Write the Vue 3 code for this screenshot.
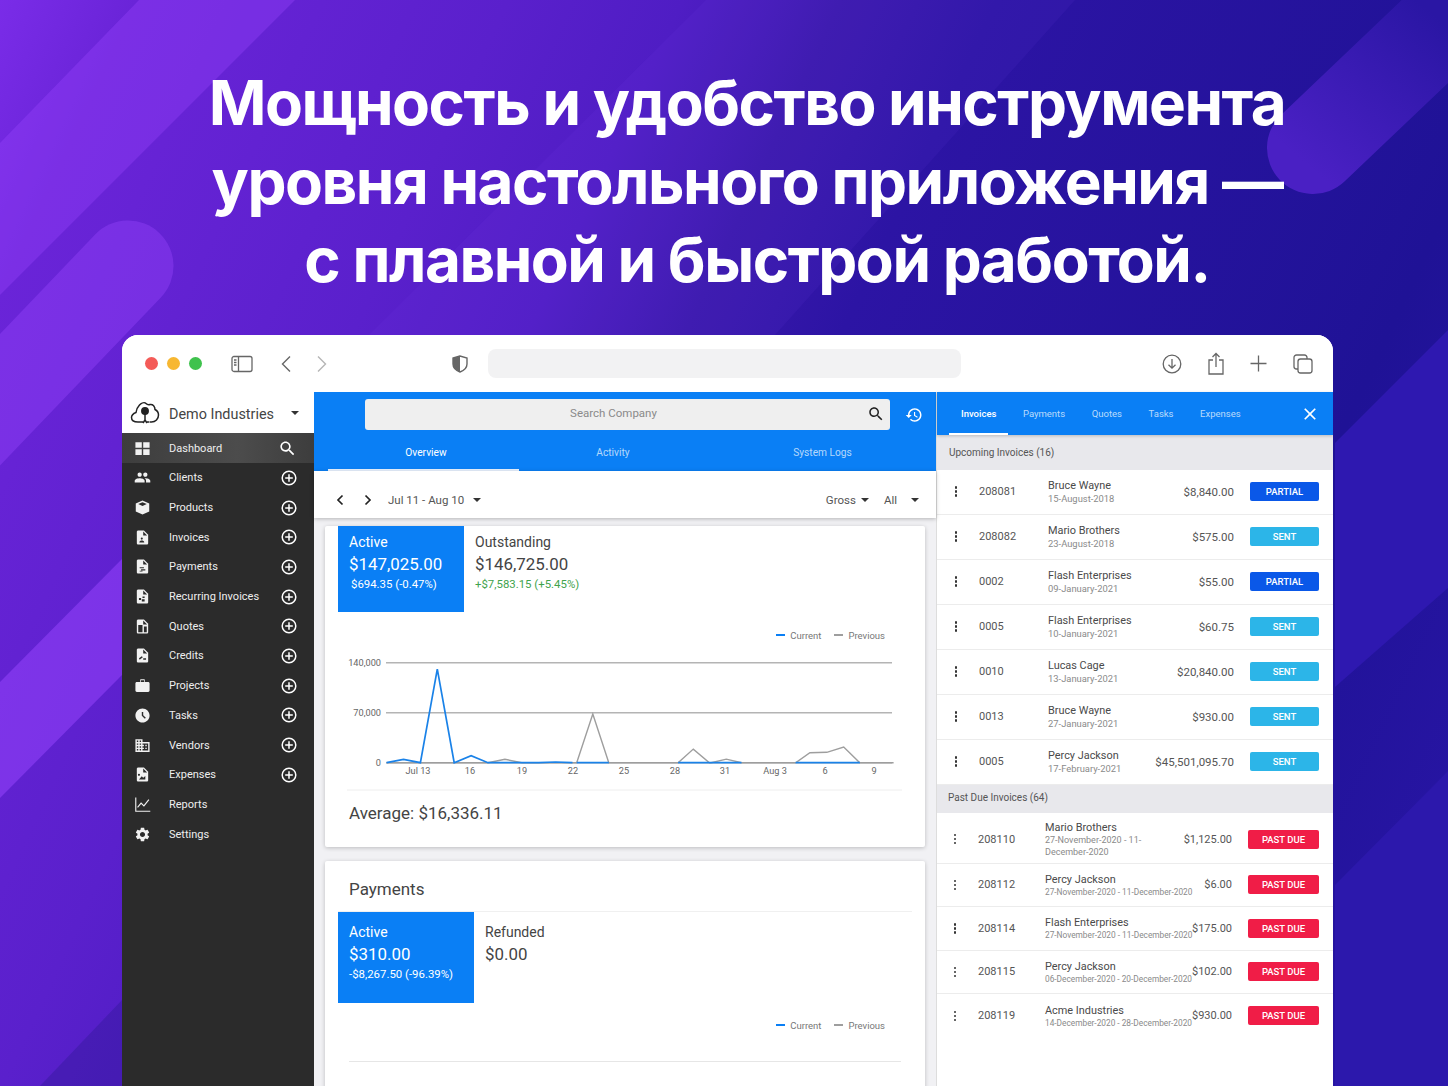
<template>
  <div class="page">
    <!-- background stripes -->
    <svg class="stripes" width="1448" height="1086" viewBox="0 0 1448 1086">
      <defs>
        <linearGradient id="blob" gradientUnits="userSpaceOnUse" x1="1313" y1="170" x2="1440" y2="20">
          <stop offset="0" stop-color="#4a20c4" />
          <stop offset="1" stop-color="#2a16a4" />
        </linearGradient>
      </defs>
      <polygon points="139,0 295,0 0,295 0,143" fill="#9a46ff" opacity="0.35" />
      <polygon points="706,0 1075,0 775,335 369,335" fill="#8a50ff" opacity="0.07" />
      <line x1="128" y1="266" x2="-120" y2="525" stroke="#9a46ff" stroke-width="91" stroke-linecap="round" opacity="0.38" />
      <polygon points="122,559 122,675 0,798 0,682" fill="#9a46ff" opacity="0.5" />
      <polygon points="122,1000 122,1086 40,1086" fill="#2c1690" opacity="0.35" />
      <line x1="1313" y1="148" x2="1500" y2="-30" stroke="url(#blob)" stroke-width="92" stroke-linecap="round" />
      <polygon points="1335,443 1448,330 1448,588 1335,687" fill="#2e18b0" />
      <polygon points="1335,885 1448,771 1448,1086 1335,1086" fill="#2c18ac" />
    </svg>

    <h1 class="headline">
      Мощность и удобство инструмента<br />
      уровня настольного приложения —<br />
      <span class="headline-last">с плавной и быстрой работой.</span>
    </h1>

    <div class="window">
      <div class="toolbar">
        <span class="dot red"></span>
        <span class="dot yellow"></span>
        <span class="dot green"></span>
        <svg class="tb-sidebar" width="22" height="18" viewBox="0 0 22 18" fill="none" stroke="#666" stroke-width="1.3">
          <rect x="1" y="1.5" width="20" height="15" rx="2" />
          <path d="M7.5 1.5v15" />
          <path d="M3 5h2.5M3 7.5h2.5M3 10h2.5" />
        </svg>
        <svg class="tb-back" width="12" height="18" viewBox="0 0 12 18" fill="none" stroke="#666" stroke-width="1.4">
          <path d="M10 1.5 2.5 9l7.5 7.5" />
        </svg>
        <svg class="tb-forward" width="12" height="18" viewBox="0 0 12 18" fill="none" stroke="#b5b5b5" stroke-width="1.4">
          <path d="M2 1.5 9.5 9 2 16.5" />
        </svg>
        <svg class="tb-shield" width="16" height="18" viewBox="0 0 16 18">
          <path d="M8 1 1 3v6c0 4 3 6.5 7 8 4-1.5 7-4 7-8V3z" fill="#fff" stroke="#666" stroke-width="1.4" />
          <path d="M8 1 1 3v6c0 4 3 6.5 7 8z" fill="#666" />
        </svg>
        <div class="address"></div>
        <div class="tb-right">
          <svg width="20" height="20" viewBox="0 0 20 20" fill="none" stroke="#666" stroke-width="1.3">
            <circle cx="10" cy="10" r="8.8" />
            <path d="M10 5v9M6.5 10.8 10 14.2l3.5-3.4" />
          </svg>
          <svg width="16" height="23" viewBox="0 0 16 23" fill="none" stroke="#666" stroke-width="1.3">
            <path d="M5 8H1v14h14V8h-4" />
            <path d="M8 15V2M4.5 5 8 1.5 11.5 5" />
          </svg>
          <svg width="17" height="17" viewBox="0 0 17 17" fill="none" stroke="#666" stroke-width="1.3">
            <path d="M8.5 0.5v16M0.5 8.5h16" />
          </svg>
          <svg width="20" height="20" viewBox="0 0 20 20" fill="none" stroke="#666" stroke-width="1.3">
            <path d="M5 15H3.5A2.5 2.5 0 0 1 1 12.5V3.5A2.5 2.5 0 0 1 3.5 1h8A2.5 2.5 0 0 1 14 3.5V5" />
            <rect x="5" y="5" width="14" height="14" rx="2.5" />
          </svg>
        </div>
      </div>

      <div class="app">
        <aside class="sidebar">
          <div class="company">
            <svg class="cloud" width="30" height="26" viewBox="0 0 30 26" fill="none" stroke="#222" stroke-width="1.5">
              <path d="M8 22c-4 0-6.500-1.500-6.500-4.500 0-2.500 2-4 4.500-5 .5-3 1.500-5.500 3.500-7.500 2-2 5-3 6.500-1.500 1 1 2 1.500 4 1 3-.5 5 2 5 5 2 1 3.500 3 3.500 5.500 0 4-3 7-7 7h-2" />
              <path d="M8 22h5M17 22h2" />
              <circle cx="15" cy="11" r="3.2" fill="#222" />
              <path d="M15 11v9M15 20l-2 3M15 20l2 3" />
            </svg>
            <span class="company-name">Demo Industries</span>
            <span class="caret"></span>
          </div>
          <nav class="nav">
            <div v-for="item in navItems" :key="item.label" :class="['nav-row', { current: item.current }]">
              <svg class="nav-icon" width="17" height="17" viewBox="0 0 24 24" fill="#f1f1f1">
                <path v-if="item.icon" :d="item.icon" />
                <path v-if="item.marks" :d="item.marks" fill="#2b2b2b" />
                <path v-if="item.line" :d="item.line" fill="none" stroke="#f1f1f1" stroke-width="1.6" />
              </svg>
              <span class="nav-label">{{ item.label }}</span>
              <svg v-if="item.current" class="nav-action" width="19" height="19" viewBox="0 0 24 24" fill="#fff">
                <path :d="icons.search" />
              </svg>
              <svg v-else-if="item.add" class="nav-action" width="16" height="16" viewBox="0 0 16 16" fill="none" stroke="#fff" stroke-width="1.5">
                <circle cx="8" cy="8" r="6.8" />
                <path d="M8 4.2v7.6M4.2 8h7.6" />
              </svg>
            </div>
          </nav>
        </aside>

        <main class="center">
          <div class="center-head">
            <div class="search-line">
              <div class="search">
                <span class="search-text">Search Company</span>
                <svg class="search-icon" width="18" height="18" viewBox="0 0 24 24" fill="#222">
                  <path :d="icons.search" />
                </svg>
              </div>
              <svg class="history" width="18" height="18" viewBox="0 0 24 24" fill="#fff">
                <path :d="icons.history" />
              </svg>
            </div>
            <div class="center-tabs">
              <div class="center-tab active"><span>Overview</span></div>
              <div class="center-tab activity">Activity</div>
              <div class="center-tab logs">System Logs</div>
            </div>
          </div>

          <div class="filters">
            <svg width="10" height="12" viewBox="0 0 10 12" fill="none" stroke="#222" stroke-width="1.7">
              <path d="M7.5 1.5 3 6l4.5 4.5" />
            </svg>
            <svg class="next" width="10" height="12" viewBox="0 0 10 12" fill="none" stroke="#222" stroke-width="1.7">
              <path d="M2.5 1.5 7 6l-4.5 4.5" />
            </svg>
            <span class="range">Jul 11 - Aug 10</span>
            <span class="caret small wide-gap"></span>
            <span class="spacer"></span>
            <span class="filter-text">Gross</span>
            <span class="caret small"></span>
            <span class="filter-text all">All</span>
            <span class="caret last"></span>
          </div>

          <div class="cards">
            <section class="card first">
              <div class="tiles">
                <div class="tile active">
                  <div class="tile-title">Active</div>
                  <div class="tile-value">$147,025.00</div>
                  <div class="tile-diff indent">$694.35 (-0.47%)</div>
                </div>
                <div class="tile">
                  <div class="tile-title">Outstanding</div>
                  <div class="tile-value">$146,725.00</div>
                  <div class="tile-diff up">+$7,583.15 (+5.45%)</div>
                </div>
              </div>
              <div class="legend">
                <span class="legend-dash blue"></span><span>Current</span>
                <span class="legend-dash gray"></span><span>Previous</span>
              </div>
              <svg class="chart" width="600" height="150" viewBox="325 643 600 150">
                <line v-for="g in gridLines" :key="g.y" x1="386" x2="892" :y1="g.y" :y2="g.y" stroke="#b4b4b4" stroke-width="1.5" />
                <text v-for="g in gridLines" :key="'l' + g.y" x="381" :y="g.y + 3" text-anchor="end" class="axis">{{ g.label }}</text>
                <text v-for="t in xTicks" :key="t.label" :x="t.x" y="773.5" text-anchor="middle" class="axis">{{ t.label }}</text>
                <polyline :points="previousPoints" fill="none" stroke="#9e9e9e" stroke-width="1.4" />
                <polyline v-for="(p, i) in currentPoints" :key="i" :points="p" fill="none" stroke="#1a82e8" stroke-width="1.7" />
                <line x1="347" x2="902" y1="790" y2="790" stroke="#eeeeee" stroke-width="1" />
              </svg>
              <div class="average">Average: $16,336.11</div>
            </section>

            <section class="card second">
              <h2 class="card-title">Payments</h2>
              <div class="tiles wide">
                <div class="tile active">
                  <div class="tile-title">Active</div>
                  <div class="tile-value">$310.00</div>
                  <div class="tile-diff">-$8,267.50 (-96.39%)</div>
                </div>
                <div class="tile">
                  <div class="tile-title">Refunded</div>
                  <div class="tile-value">$0.00</div>
                </div>
              </div>
              <div class="legend low">
                <span class="legend-dash blue"></span><span>Current</span>
                <span class="legend-dash gray"></span><span>Previous</span>
              </div>
              <div class="empty-rule"></div>
            </section>
          </div>
        </main>

        <aside class="panel">
          <div class="panel-tabs">
            <div v-for="(t, i) in panelTabs" :key="t" :class="['panel-tab', { active: i === 0 }]">{{ t }}</div>
            <svg class="panel-close" width="20" height="20" viewBox="0 0 24 24" fill="#fff">
              <path :d="icons.close" />
            </svg>
          </div>

          <div class="group">Upcoming Invoices (16)</div>
          <div v-for="row in upcoming" :key="row.id + row.date" class="inv">
            <span class="more"><i></i><i></i><i></i></span>
            <span class="inv-id">{{ row.id }}</span>
            <div class="inv-client">
              <div class="inv-name">{{ row.name }}</div>
              <div class="inv-date">{{ row.date }}</div>
            </div>
            <span class="inv-amount">{{ row.amount }}</span>
            <span :class="['badge', row.status.toLowerCase()]">{{ row.status }}</span>
          </div>

          <div class="group past">Past Due Invoices (64)</div>
          <div v-for="row in pastDue" :key="row.id" :class="['inv', 'overdue', { tall: row.tall }]">
            <span class="more"><i></i><i></i><i></i></span>
            <span class="inv-id">{{ row.id }}</span>
            <div class="inv-client">
              <div class="inv-name">{{ row.name }}</div>
              <div class="inv-date">{{ row.date }}</div>
            </div>
            <span class="inv-amount">{{ row.amount }}</span>
            <span class="badge due">PAST DUE</span>
          </div>
        </aside>
      </div>
    </div>
  </div>
</template>

<script setup>
const icons = {
  search: 'M15.5 14h-.79l-.28-.27C15.41 12.59 16 11.11 16 9.5 16 5.91 13.09 3 9.5 3S3 5.91 3 9.5 5.91 16 9.5 16c1.61 0 3.09-.59 4.23-1.57l.27.28v.79l5 4.99L20.49 19l-4.99-5zm-6 0C7.01 14 5 11.99 5 9.5S7.01 5 9.5 5 14 7.01 14 9.5 11.99 14 9.5 14z',
  history: 'M13 3c-4.97 0-9 4.03-9 9H1l3.89 3.89.07.14L9 12H6c0-3.87 3.13-7 7-7s7 3.13 7 7-3.13 7-7 7c-1.93 0-3.68-.79-4.94-2.06l-1.42 1.42C8.27 19.99 10.51 21 13 21c4.97 0 9-4.03 9-9s-4.03-9-9-9zm-1 5v5l4.28 2.54.72-1.21-3.5-2.08V8H12z',
  close: 'M19 6.41L17.59 5 12 10.59 6.41 5 5 6.41 10.59 12 5 17.59 6.41 19 12 13.41 17.59 19 19 17.59 13.41 12z',
}

const file = 'M14 2H6c-1.1 0-2 .9-2 2v16c0 1.1.9 2 2 2h12c1.1 0 2-.9 2-2V8l-6-6z'

const navItems = [
  { label: 'Dashboard', current: true, icon: 'M2 3h9v8H2zM13 3h9v8h-9zM2 13h9v8H2zM13 13h9v8h-9z' },
  { label: 'Clients', add: true, icon: 'M16 11c1.66 0 2.99-1.34 2.99-3S17.66 5 16 5c-1.66 0-3 1.34-3 3s1.34 3 3 3zm-8 0c1.66 0 2.99-1.34 2.99-3S9.66 5 8 5C6.34 5 5 6.34 5 8s1.34 3 3 3zm0 2c-2.33 0-7 1.17-7 3.5V19h14v-2.5c0-2.33-4.67-3.5-7-3.5zm8 0c-.29 0-.62.02-.97.05 1.16.84 1.97 1.97 1.97 3.45V19h6v-2.5c0-2.33-4.67-3.5-7-3.5z' },
  { label: 'Products', add: true, icon: 'M12 2l9.5 4.5v11L12 22l-9.5-4.5v-11z', marks: 'M12 4.5 6 7l6 3 6-3z' },
  { label: 'Invoices', add: true, icon: file, marks: 'M13 3.5V9h5.5zM11 12a1.5 1.5 0 1 1 0 3 1.5 1.5 0 0 1 0-3zM7.5 19c0-2 2-2.8 3.5-2.8s3.5.8 3.5 2.8z' },
  { label: 'Payments', add: true, icon: file, marks: 'M13 3.5V9h5.5zM8 13h6v1.5H8zM10 16h6v1.5h-6zM8 18h4v1H8z' },
  { label: 'Recurring Invoices', add: true, icon: file, marks: 'M13 3.5V9h5.5zM7 14h3v3H7zM12 12h3v2h-3zM11 16h4v3h-4z' },
  { label: 'Quotes', add: true, icon: file, marks: 'M13 3.5V9h5.5zM6 10h6v10H6zM14 12h4v8h-4z' },
  { label: 'Credits', add: true, icon: file, marks: 'M13 3.5V9h5.5zM7 16l4-3 1.5 1.5L8 18zM13 16h4v2h-4z' },
  { label: 'Projects', add: true, icon: 'M20 7h-4.5V4.5c0-.8-.7-1.5-1.5-1.5h-4c-.8 0-1.5.7-1.5 1.5V7H4c-1.1 0-2 .9-2 2v10c0 1.1.9 2 2 2h16c1.1 0 2-.9 2-2V9c0-1.1-.9-2-2-2zm-5.5 0h-5V4.5h5z' },
  { label: 'Tasks', add: true, icon: 'M11.99 2C6.47 2 2 6.48 2 12s4.47 10 9.99 10C17.52 22 22 17.52 22 12S17.52 2 11.99 2zm3.3 14.71L11 12.41V7h2v4.59l3.71 3.71-1.42 1.41z' },
  { label: 'Vendors', add: true, icon: 'M12 7V3H2v18h20V7H12zM6 19H4v-2h2v2zm0-4H4v-2h2v2zm0-4H4V9h2v2zm0-4H4V5h2v2zm4 12H8v-2h2v2zm0-4H8v-2h2v2zm0-4H8V9h2v2zm0-4H8V5h2v2zm10 12h-8v-2h2v-2h-2v-2h2v-2h-2V9h8v10zm-2-8h-2v2h2v-2zm0 4h-2v2h2v-2z' },
  { label: 'Expenses', add: true, icon: file, marks: 'M13 3.5V9h5.5zM7 11a1.5 1.5 0 1 1 0 3 1.5 1.5 0 0 1 0-3zM7 19l4-4.5 2 2 3-2.5v5z' },
  { label: 'Reports', line: 'M2.5 2v19.5H23M5 16l5-6 4 4 7-9' },
  { label: 'Settings', icon: 'M19.14 12.94c.04-.3.06-.61.06-.94 0-.32-.02-.64-.07-.94l2.03-1.58c.18-.14.23-.41.12-.61l-1.92-3.32c-.12-.22-.37-.29-.59-.22l-2.39.96c-.5-.38-1.03-.7-1.62-.94l-.36-2.54c-.04-.24-.24-.41-.48-.41h-3.84c-.24 0-.43.17-.47.41l-.36 2.54c-.59.24-1.13.57-1.62.94l-2.39-.96c-.22-.08-.47 0-.59.22L2.74 8.87c-.12.21-.08.47.12.61l2.03 1.58c-.05.3-.09.63-.09.94s.02.64.07.94l-2.03 1.58c-.18.14-.23.41-.12.61l1.92 3.32c.12.22.37.29.59.22l2.39-.96c.5.38 1.03.7 1.62.94l.36 2.54c.05.24.24.41.48.41h3.84c.24 0 .44-.17.47-.41l.36-2.54c.59-.24 1.13-.56 1.62-.94l2.39.96c.22.08.47 0 .59-.22l1.92-3.32c.12-.22.07-.47-.12-.61l-2.01-1.58zM12 15.6c-1.98 0-3.6-1.62-3.6-3.6s1.62-3.6 3.6-3.6 3.6 1.62 3.6 3.6-1.62 3.6-3.6 3.6z' },
]

// chart data is [day index from Jul 11, value]
const X0 = 386.6
const DAY = 16.9
const BASE = 762.7
const toPoints = (data) => data.map(([d, v]) => `${(X0 + d * DAY).toFixed(1)},${(BASE - v / 1400).toFixed(1)}`).join(' ')

const gridLines = [
  { y: 662.7, label: '140,000' },
  { y: 712.7, label: '70,000' },
  { y: 762.7, label: '0' },
]

const xTicks = [
  { x: 418, label: 'Jul 13' },
  { x: 470, label: '16' },
  { x: 522, label: '19' },
  { x: 573, label: '22' },
  { x: 624, label: '25' },
  { x: 675, label: '28' },
  { x: 725, label: '31' },
  { x: 775, label: 'Aug 3' },
  { x: 825, label: '6' },
  { x: 874, label: '9' },
]

const previousPoints = toPoints([
  [0, 0], [6, 0], [7, 4700], [8, 0], [11.25, 0], [12.2, 68000], [13.15, 0], [17.25, 0], [18.15, 19000],
  [19.1, 0], [19.2, 0], [20.1, 5000], [21, 0], [24.2, 0], [25.05, 14000], [26.05, 14500], [27.05, 22000], [28, 0], [30, 0],
])

const currentPoints = [
  [[0, 0], [1, 4700], [2, 0], [3, 131000], [4, 0], [5, 9800], [6, 0], [8, 0], [9, 0], [10, 1000], [11, 0]],
  [[11.25, 0], [13.15, 0]],
  [[17.25, 0], [21, 0]],
  [[24.2, 0], [28, 0]],
].map(toPoints)

const panelTabs = ['Invoices', 'Payments', 'Quotes', 'Tasks', 'Expenses']

const upcoming = [
  { id: '208081', name: 'Bruce Wayne', date: '15-August-2018', amount: '$8,840.00', status: 'PARTIAL' },
  { id: '208082', name: 'Mario Brothers', date: '23-August-2018', amount: '$575.00', status: 'SENT' },
  { id: '0002', name: 'Flash Enterprises', date: '09-January-2021', amount: '$55.00', status: 'PARTIAL' },
  { id: '0005', name: 'Flash Enterprises', date: '10-January-2021', amount: '$60.75', status: 'SENT' },
  { id: '0010', name: 'Lucas Cage', date: '13-January-2021', amount: '$20,840.00', status: 'SENT' },
  { id: '0013', name: 'Bruce Wayne', date: '27-January-2021', amount: '$930.00', status: 'SENT' },
  { id: '0005', name: 'Percy Jackson', date: '17-February-2021', amount: '$45,501,095.70', status: 'SENT' },
]

const pastDue = [
  { id: '208110', name: 'Mario Brothers', date: '27-November-2020 - 11-December-2020', amount: '$1,125.00', tall: true },
  { id: '208112', name: 'Percy Jackson', date: '27-November-2020 - 11-December-2020', amount: '$6.00' },
  { id: '208114', name: 'Flash Enterprises', date: '27-November-2020 - 11-December-2020', amount: '$175.00' },
  { id: '208115', name: 'Percy Jackson', date: '06-December-2020 - 20-December-2020', amount: '$102.00' },
  { id: '208119', name: 'Acme Industries', date: '14-December-2020 - 28-December-2020', amount: '$930.00' },
]
</script>

<style>
html,
body {
  margin: 0;
  background: #2a1398;
}
</style>

<style scoped>
.page {
  position: relative;
  width: 1448px;
  height: 1086px;
  overflow: hidden;
  display: flex;
  flex-direction: column;
  align-items: center;
  font-family: Roboto, "Liberation Sans", sans-serif;
  background: linear-gradient(115deg, #7a2ce8 0%, #6a24d8 7%, #5a20cc 26%, #4f1dc4 35%, #3a18ac 43%, #2c14a4 51%, #1f1296 79%, #2a16a8 100%);
}

.stripes {
  position: absolute;
  left: 0;
  top: 0;
}

.headline {
  position: relative;
  margin: 0 0 0 46px;
  padding-top: 64px;
  height: 335px;
  box-sizing: border-box;
  text-align: center;
  color: #fff;
  font-family: Inter, "Noto Sans", sans-serif;
  font-size: 62px;
  line-height: 78.5px;
  font-weight: 700;
  letter-spacing: -1.5px;
  white-space: nowrap;
}

.headline-last {
  padding-left: 20px;
}

.window {
  position: relative;
  width: 1211px;
  height: 751px;
  margin-left: 7px;
  background: #fff;
  border-radius: 16px 16px 0 0;
  overflow: hidden;
  display: flex;
  flex-direction: column;
}

.toolbar {
  height: 57px;
  flex: none;
  display: flex;
  align-items: center;
  padding: 0 20px 0 23px;
  box-sizing: border-box;
  background: #fff;
}

.dot {
  width: 13px;
  height: 13px;
  border-radius: 50%;
  margin-right: 9px;
}
.red { background: #f45b58; }
.yellow { background: #f7b731; }
.green { background: #3fc24d; }

.tb-sidebar { margin-left: 20px; }
.tb-back { margin-left: 27px; }
.tb-forward { margin-left: 24px; }
.tb-shield { margin-left: 124px; }

.address {
  width: 473px;
  height: 29px;
  margin-left: 20px;
  border-radius: 8px;
  background: #f2f2f3;
}

.tb-right {
  margin-left: auto;
  display: flex;
  align-items: center;
  gap: 26px;
}

.app {
  flex: 1;
  display: flex;
  min-height: 0;
}

/* left nav */
.sidebar {
  width: 192px;
  flex: none;
  background: #2b2b2b;
  display: flex;
  flex-direction: column;
}

.company {
  height: 41px;
  display: flex;
  align-items: center;
  padding: 0 15px 0 8px;
  background: #fff;
  flex: none;
}

.company-name {
  margin: 3px 0 0 9px;
  font-size: 14.4px;
  color: #444;
  flex: 1;
}

.caret {
  width: 0;
  height: 0;
  border-left: 4px solid transparent;
  border-right: 4px solid transparent;
  border-top: 4px solid #333;
}
.caret.small { margin-left: 5px; }
.caret.wide-gap { margin-left: 9px; }
.caret.last { margin-left: 14px; }

.nav-row {
  height: 29.7px;
  display: flex;
  align-items: center;
  padding: 0 17px 0 12px;
  color: #eee;
  font-size: 11px;
}
.nav-row.current {
  height: 30px;
  background: linear-gradient(90deg, #3d3d3d, #4c4c4c 60%, #3d3d3d);
}

.nav-label {
  margin-left: 18px;
  flex: 1;
}

/* center column */
.center {
  width: 622px;
  flex: none;
  display: flex;
  flex-direction: column;
  background: #f1f1f4;
  min-height: 0;
}

.center-head {
  background: #0a7ff5;
  height: 79px;
  flex: none;
  box-sizing: border-box;
  padding-top: 7px;
}

.search-line {
  display: flex;
  align-items: center;
  padding-left: 51px;
}

.search {
  position: relative;
  width: 525px;
  height: 31px;
  box-sizing: border-box;
  border-radius: 3px;
  background: #efefef;
  display: flex;
  align-items: center;
  justify-content: center;
  padding: 0 28px 3px 0;
  color: #8a8a8a;
  font-size: 11.5px;
}

.search-icon {
  position: absolute;
  right: 5px;
  top: 6px;
}

.history { margin-left: 15px; }

.center-tabs {
  display: flex;
  padding-left: 14px;
  margin-top: 7px;
}

.center-tab {
  text-align: center;
  height: 34px;
  box-sizing: border-box;
  line-height: 32px;
  font-size: 10.2px;
  color: rgba(255, 255, 255, 0.7);
  flex: none;
}
.center-tab.active {
  width: 191px;
  color: #fff;
  border-bottom: 2px solid #e8f2ff;
  padding-left: 5px;
}
.center-tab.activity { width: 188px; }
.center-tab.logs { width: 231px; }

.filters {
  height: 47px;
  flex: none;
  display: flex;
  align-items: center;
  background: #fff;
  padding: 10px 17px 0 21px;
  box-sizing: border-box;
  color: #555;
  font-size: 11.5px;
  box-shadow: 0 1px 4px rgba(0, 0, 0, 0.25);
  position: relative;
  z-index: 1;
}
.filters .next { margin-left: 18px; }
.range { margin-left: 15px; }
.spacer { flex: 1; }
.filter-text.all { margin-left: 15px; }

.cards {
  flex: 1;
  min-height: 0;
  padding: 8px 11px 0;
  display: flex;
  flex-direction: column;
  gap: 14px;
}

.card {
  background: #fff;
  box-shadow: 0 1px 4px rgba(0, 0, 0, 0.22);
  border-radius: 2px;
  padding: 0 13px;
  flex: none;
  position: relative;
}
.card.first { height: 321px; }
.card.second { height: 240px; }

.tiles {
  display: flex;
  height: 86px;
}
.tiles.wide {
  height: 91px;
  border-top: 1px solid #f0f0f0;
}

.tile {
  padding: 7px 11px 0;
  color: #444;
  font-size: 14px;
  line-height: 18px;
}
.tiles.wide .tile { padding-top: 11px; }
.tile.active {
  width: 126px;
  box-sizing: border-box;
  background: #0a7ff5;
  color: #fff;
}
.tiles.wide .tile.active { width: 136px; }

.tile-value {
  font-size: 16.9px;
  line-height: 24px;
  margin-top: 1px;
}

.tile-diff {
  font-size: 11.4px;
  line-height: 14px;
  margin-top: 1px;
  white-space: nowrap;
}
.tile-diff.indent { margin-left: 2px; }
.tile-diff.up { color: #3fa34d; }

.legend {
  display: flex;
  align-items: center;
  justify-content: flex-end;
  margin-top: 17px;
  padding-right: 27px;
  color: #777;
  font-size: 9.5px;
  height: 12px;
}
.legend.low { margin-top: 16px; }

.legend-dash {
  width: 9px;
  height: 2px;
  margin-right: 5px;
}
.legend-dash.blue { background: #0a7ff5; }
.legend-dash.gray { background: #9e9e9e; margin-left: 13px; }

.chart {
  display: block;
  margin: 2px 0 0 -13px;
}

.axis {
  font-size: 9.2px;
  fill: #666;
  font-family: Roboto, "Liberation Sans", sans-serif;
}

.average {
  font-size: 17px;
  color: #444;
  padding-left: 11px;
  margin-top: 10px;
}

.card-title {
  margin: 0;
  font-weight: 400;
  font-size: 17px;
  color: #444;
  padding: 18px 0 0 11px;
  height: 50px;
  box-sizing: border-box;
  line-height: 20px;
}

.empty-rule {
  height: 1px;
  background: #e6e6e6;
  margin: 30px 11px 0 11px;
}

/* right panel */
.panel {
  flex: 1;
  min-width: 0;
  background: #fff;
  border-left: 1px solid #ddd;
  display: flex;
  flex-direction: column;
}

.panel-tabs {
  height: 43px;
  flex: none;
  background: #0a7ff5;
  display: flex;
  align-items: center;
  padding-left: 12px;
  position: relative;
  box-sizing: border-box;
  box-shadow: 0 1px 3px rgba(0, 0, 0, 0.2);
  z-index: 1;
}

.panel-tab {
  height: 43px;
  line-height: 44px;
  padding: 0 12px;
  box-sizing: border-box;
  font-size: 9.5px;
  color: rgba(255, 255, 255, 0.72);
  margin-right: 2.6px;
}
.panel-tab.active {
  color: #fff;
  font-weight: 500;
  border-bottom: 2px solid #fff;
}

.panel-close {
  position: absolute;
  right: 13px;
  top: 12px;
}

.group {
  height: 34.5px;
  flex: none;
  background: #e8e8ec;
  color: #555;
  font-size: 10px;
  line-height: 36px;
  padding-left: 12px;
}
.group.past {
  height: 28px;
  line-height: 25px;
  padding-left: 11px;
}

.inv {
  height: 45px;
  flex: none;
  box-sizing: border-box;
  display: flex;
  align-items: center;
  padding: 0 14px 0 17px;
  border-bottom: 1px solid #ececec;
  color: #555;
}
.inv:last-child { border-bottom: none; }
.inv.overdue { height: 43.5px; padding-left: 16px; }
.inv.tall { height: 51px; padding-top: 3px; }

.more {
  width: 4px;
  display: flex;
  flex-direction: column;
  gap: 1.5px;
  align-items: center;
  flex: none;
}
.more i {
  width: 2.5px;
  height: 2.5px;
  border-radius: 50%;
  background: #333;
}

.inv-id {
  width: 69px;
  margin-left: 21px;
  font-size: 11px;
  flex: none;
}
.overdue .inv-id { width: 67px; }

.inv-client {
  flex: 1 1 0;
  min-width: 0;
}
.overdue .inv-client {
  min-width: 147px;
  margin-top: 2px;
}
.overdue.tall .inv-client {
  min-width: 0;
  margin-top: 0;
}

.inv-name {
  font-size: 10.9px;
  line-height: 13px;
  color: #4a4a4a;
  white-space: nowrap;
}

.inv-date {
  font-size: 9.4px;
  line-height: 13px;
  color: #8a8a8a;
}
.overdue .inv-date {
  font-size: 8.3px;
  white-space: nowrap;
}
.overdue.tall .inv-date {
  font-size: 9px;
  line-height: 12px;
  white-space: normal;
}

.inv-amount {
  flex: none;
  text-align: right;
  font-size: 11.5px;
  white-space: nowrap;
}
.overdue .inv-amount { font-size: 11px; }

.badge {
  width: 69px;
  height: 19px;
  margin-left: 16px;
  flex: none;
  border-radius: 2px;
  color: #fff;
  font-size: 9.5px;
  font-weight: 500;
  line-height: 19px;
  text-align: center;
}
.badge.partial { background: #0a58e8; }
.badge.sent { background: #2cb5e8; }
.badge.due {
  width: 71px;
  background: #f01d47;
}
</style>
